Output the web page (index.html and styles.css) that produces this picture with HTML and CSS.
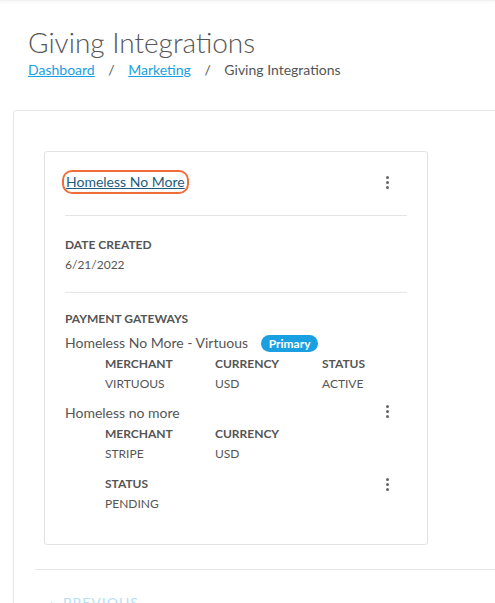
FILE: index.html
```html
<!DOCTYPE html>
<html lang="en">
<head>
    <meta charset="UTF-8">
    <meta name="viewport" content="width=device-width, initial-scale=1.0">
    <title>Giving Integrations</title>
    <link rel="stylesheet" href="styles.css">
</head>
<body>

<div class="topbar"></div>

<!-- page title + breadcrumb -->
<div class="page-head">
    <h1>Giving Integrations</h1>
    <div class="crumbs">
        <a href="#">Dashboard</a>
        <span class="sep">/</span>
        <a href="#">Marketing</a>
        <span class="sep">/</span>
        <span>Giving Integrations</span>
    </div>
</div>

<div class="panel">
    <div class="card">
        <div class="card-head">
            <a href="#" class="card-title">Homeless No More</a>
            <span class="kebab"><i></i><i></i><i></i></span>
        </div>

        <div class="section">
            <div class="label">Date Created</div>
            <div class="value">6/21/2022</div>
        </div>

        <div class="section gateways">
            <div class="label">Payment Gateways</div>

            <!-- gateway 1 -->
            <div class="gw-name">Homeless No More - Virtuous <span class="badge">Primary</span></div>
            <div class="gw-grid">
                <div>
                    <div class="label">Merchant</div>
                    <div class="value">Virtuous</div>
                </div>
                <div>
                    <div class="label">Currency</div>
                    <div class="value">USD</div>
                </div>
                <div>
                    <div class="label">Status</div>
                    <div class="value">Active</div>
                </div>
            </div>

            <!-- gateway 2 -->
            <div class="gw-row">
                <div class="gw-name">Homeless no more</div>
                <span class="kebab"><i></i><i></i><i></i></span>
            </div>
            <div class="gw-grid">
                <div>
                    <div class="label">Merchant</div>
                    <div class="value">Stripe</div>
                </div>
                <div>
                    <div class="label">Currency</div>
                    <div class="value">USD</div>
                </div>
            </div>
            <div class="gw-row status-row">
                <div>
                    <div class="label">Status</div>
                    <div class="value">Pending</div>
                </div>
                <span class="kebab"><i></i><i></i><i></i></span>
            </div>
        </div>
    </div>

    <div class="pager">
        <a href="#" class="prev">&lsaquo;&nbsp; PREVIOUS</a>
    </div>
</div>

</body>
</html>
```

FILE: styles.css
```css
body {
    margin: 0;
    font-family: Lato, "Open Sans", Arial, sans-serif;
    color: #555;
    background-color: #fff;
    overflow: hidden;
}
.topbar {
    height: 1px;
    background-color: #f0f0f0;
    box-shadow: 0 1px 3px rgba(0, 0, 0, 0.08);
}
.page-head {
    padding: 23px 0 0 28px;
}
h1 {
    margin: 0;
    font-size: 28px;
    line-height: 36px;
    font-weight: 300;
    color: #555;
}
.crumbs {
    font-size: 14px;
    line-height: 20px;
    color: #555;
}
.crumbs a {
    color: #1a9fe0;
}
.crumbs .sep {
    margin: 0 10px;
}

/* outer panel */
.panel {
    margin: 30px -20px 0 13px;
    border: 1px solid #e6e6e6;
    border-radius: 3px;
    padding: 40px 0 0 30px;
}
.card {
    width: 342px;
    border: 1px solid #e3e3e3;
    border-radius: 3px;
    padding: 20px 20px 30px 20px;
}
.card-head {
    display: flex;
    justify-content: space-between;
    align-items: center;
    padding-bottom: 23px;
    border-bottom: 1px solid #e5e5e5;
}
.card-title {
    font-size: 14px;
    line-height: 20px;
    color: #1d5c80;
    margin-left: -1px;
    padding: 0 2px;
    border-radius: 8px;
    box-shadow: 0 0 0 2px #f26b3a;
}
.kebab {
    display: flex;
    flex-direction: column;
    gap: 2px;
    margin-right: 18px;
}
.kebab i {
    width: 3px;
    height: 3px;
    border-radius: 50%;
    background-color: #666;
}

.section {
    padding: 19px 0 17px;
    border-bottom: 1px solid #e5e5e5;
}
.section.gateways {
    border-bottom: none;
    padding: 16px 0 0;
}
.label {
    font-size: 12px;
    line-height: 20px;
    font-weight: 700;
    text-transform: uppercase;
    color: #555;
}
.value {
    font-size: 12px;
    line-height: 20px;
    text-transform: uppercase;
    color: #555;
}
.gw-name {
    font-size: 14px;
    line-height: 20px;
    color: #555;
    margin-top: 4px;
}
.badge {
    display: inline-block;
    margin-left: 9px;
    padding: 0 8px;
    font-size: 12px;
    line-height: 17px;
    font-weight: 700;
    color: #fff;
    background-color: #1a9fe0;
    border-radius: 9px;
}
.gw-grid {
    display: grid;
    grid-template-columns: 110px 107px auto;
    margin: 1px 0 5px 40px;
}
.gw-row {
    display: flex;
    justify-content: space-between;
    align-items: center;
}
.status-row {
    margin-left: 40px;
    margin-top: 10px;
    align-items: flex-start;
}
.status-row .kebab {
    margin-top: 4px;
}

.pager {
    margin: 24px 0 0 -9px;
    border-top: 1px solid #e5e5e5;
    padding: 22px 0 0 14px;
}
.prev {
    font-size: 14px;
    line-height: 20px;
    color: #b5dff4;
    text-decoration: none;
    letter-spacing: 1px;
}
```
